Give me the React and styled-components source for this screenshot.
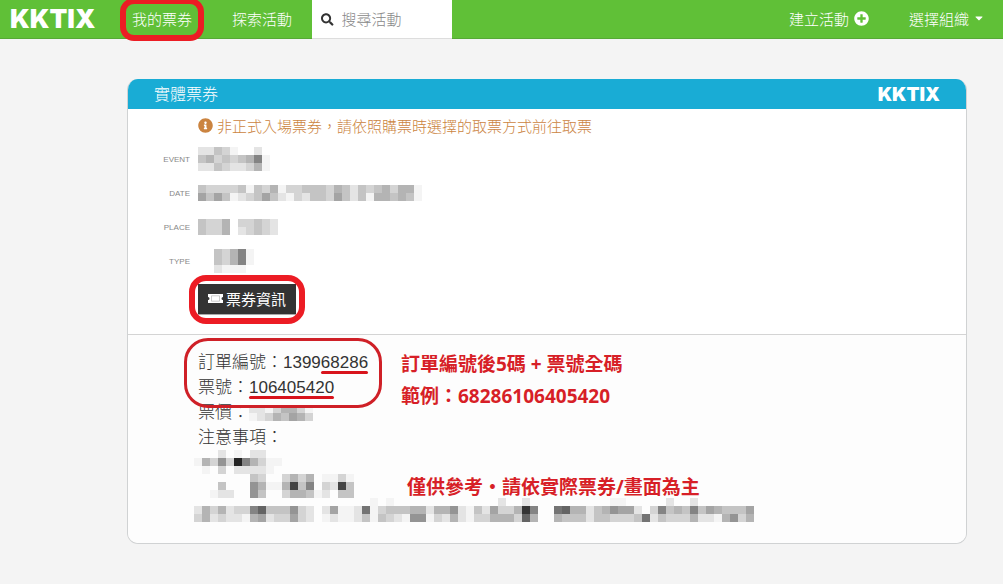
import React from "react";
import styled, { createGlobalStyle } from "styled-components";
import { FaSearch, FaPlusCircle, FaInfoCircle, FaCaretDown } from "react-icons/fa";

const GlobalStyle = createGlobalStyle`
  * {
    box-sizing: border-box;
  }

  body {
    margin: 0;
    background: #f4f4f4;
    color: #333;
    font-family: "Liberation Sans", "Noto Sans CJK TC", sans-serif;
    font-size: 15px;
    font-weight: 300;
  }
`;

const Navbar = styled.nav`
  display: flex;
  align-items: stretch;
  height: 39px;
  background: #60c037;
  border-bottom: 1px solid #56a936;
`;

const Logo = styled.a`
  display: flex;
  align-items: center;
  color: #fff;
  font-family: "Inter", sans-serif;
  font-size: ${(props) => (props.$small ? "19px" : "26px")};
  font-weight: 900;
  text-decoration: none;
`;

const Brand = styled.div`
  display: flex;
  width: 112px;
  padding: 0 0 2px 10px;
`;

const NavLink = styled.a`
  display: flex;
  align-items: center;
  gap: 5px;
  padding: 0 20px 2px;
  color: #fff;
  text-decoration: none;
`;

const NavButton = styled.button`
  display: flex;
  align-items: center;
  gap: 4px;
  padding: 0 18px 2px 20px;
  border: 0;
  background: none;
  color: #fff;
  font: inherit;
  cursor: pointer;
`;

const NavRight = styled.div`
  display: flex;
  margin-left: auto;
`;

const Search = styled.label`
  display: flex;
  align-items: center;
  gap: 8px;
  width: 140px;
  height: 39px;
  padding: 0 9px;
  background: #fff;
  border-bottom: 1px solid #ddd;
`;

const SearchInput = styled.input`
  width: 100%;
  min-width: 0;
  padding: 0;
  border: 0;
  outline: 0;
  font: inherit;

  &::placeholder {
    color: #888;
    opacity: 1;
  }
`;

/* hand-drawn style highlight around whatever it wraps */
const Marked = styled.span`
  position: relative;
  display: inline-block;

  &::after {
    content: "";
    position: absolute;
    inset: ${(props) => props.$inset};
    border: ${(props) => (props.$thin ? "3px" : "6px")} solid
      ${(props) => (props.$thin ? "#cf2027" : "#ec1c24")};
    border-radius: ${(props) => props.$radius};
    pointer-events: none;
  }
`;

const Underlined = styled.span`
  position: relative;

  &::after {
    content: "";
    position: absolute;
    left: 0;
    right: 0;
    bottom: 1px;
    height: 3px;
    border-radius: 2px;
    background: #d8141c;
  }
`;

const Card = styled.main`
  margin: 40px 36px 40px 127px;
  border: 1px solid #d0d2d3;
  border-top: 0;
  border-radius: 11px;
  background: #fff;
  overflow: hidden;
`;

const CardHeader = styled.header`
  display: flex;
  align-items: center;
  justify-content: space-between;
  height: 30px;
  padding: 0 26px;
  background: #19acd5;
  color: #fff;
`;

const CardTitle = styled.h1`
  margin: 0;
  padding-bottom: 3px;
  font-size: 16px;
  font-weight: 300;
`;

const Summary = styled.section`
  padding-bottom: 19px;
`;

const Notice = styled.p`
  display: flex;
  align-items: center;
  gap: 4px;
  height: 33px;
  margin: 0;
  padding-left: 70px;
  color: #cb8440;
`;

const Fields = styled.dl`
  margin: 0;
`;

const Field = styled.div`
  display: grid;
  grid-template-columns: 62px 1fr;
  align-items: center;
  gap: 8px;
  height: 34px;
`;

const FieldLabel = styled.dt`
  color: #888;
  font-size: 8px;
  font-weight: 400;
  text-align: right;
`;

const FieldValue = styled.dd`
  display: flex;
  margin: 0;
`;

const ButtonRow = styled.div`
  display: flex;
  padding: 6px 0 0 70px;
`;

const InfoButton = styled.button`
  display: flex;
  align-items: center;
  gap: 3px;
  height: 31px;
  padding: 0 10px 2px;
  border: 0;
  border-bottom: 1px solid #aaa;
  background: #333;
  color: #fff;
  font: inherit;
  font-weight: 400;
  cursor: pointer;
`;

const Details = styled.section`
  position: relative;
  padding: 15px 12px 21px 66px;
  border-top: 1px solid #d4d4d4;
  background: #fdfdfd;
  font-size: 17px;
  line-height: 25px;
`;

const Lines = styled.div`
  padding-left: 4px;
`;

const Line = styled.div`
  display: flex;
  align-items: center;
  height: 25px;
`;

const Remark = styled.p`
  position: absolute;
  top: ${(props) => props.$top};
  left: ${(props) => props.$left};
  margin: 0;
  color: #d71f27;
  font-family: "Open Sans", "Noto Sans CJK TC", sans-serif;
  font-size: 19px;
  font-weight: 700;
  line-height: 32px;
  white-space: nowrap;
`;

const MosaicSvg = styled.svg`
  display: block;
  max-width: 100%;
`;

const CELL = 8;

// each character is one cell: a hex grey level, or "." for nothing
function Mosaic({ rows }) {
  const width = Math.max(...rows.map((row) => row.length)) * CELL;

  return (
    <MosaicSvg
      width={width}
      height={rows.length * CELL}
      shapeRendering="crispEdges"
      aria-hidden="true"
    >
      {rows.map((row, y) =>
        row.split("").map((level, x) => {
          if (level === ".") return null;
          const grey = parseInt(level, 16) * 16 + 4;
          return (
            <rect
              key={`${x}-${y}`}
              x={x * CELL}
              y={y * CELL}
              width={CELL}
              height={CELL}
              fill={`rgb(${grey},${grey},${grey})`}
            />
          );
        })
      )}
    </MosaicSvg>
  );
}

function TicketIcon() {
  return (
    <svg width="15" height="9" viewBox="0 0 15 9" aria-hidden="true">
      <path
        fill="#fff"
        d="M0 0h15v3a1.5 1.5 0 0 0 0 3V9H0V6a1.5 1.5 0 0 0 0-3z"
      />
      <path fill="none" stroke="#aaa" strokeWidth="0.6" d="M3.5 1.8h8v5.4h-8z" />
    </svg>
  );
}

const fields = [
  { label: "EVENT", rows: ["eecdf..e.", "cbdcdcb8f", "eecdeedbf"] },
  {
    label: "DATE",
    rows: ["cddddcfcdbfddcccdbcecdcbdbbf", "acacfedcacefdeccdacecfbbcbcf"],
  },
  { label: "PLACE", rows: ["cddb.ddcde", "cddb.edcde"] },
  { label: "TYPE", rows: ["..cdb8f", "..cdb8f", "..efff."] },
];

const priceRows = ["eefdbbdf", "fedbcabd"];

const notesRows = [
  "...e.f.ee",
  "fbd9d28bdff",
  ".f.d.eeeef",
  ".......cd..dbdb.ffdf",
  "...c...9bffb4c8.de4c",
  "..fee..9c..dbbcfe.cc",
  "......................f.f.............e..e..........ff.....e..e",
  "ebdbedd86ccc9de.eaffe7fdcccbbebb9efceaddb38..76bbecb9aae.d8cbc8cabccca",
  "dbedeefbaeddade.feffecfcdef99fdebefddbbbd6b..bccceccdddc7ecdddbeefb9db",
];

export default function App() {
  return (
    <>
      <GlobalStyle />
      <Navbar lang="zh-TW">
        <Brand>
          <Logo href="#">KKTIX</Logo>
        </Brand>
        <NavLink href="#tickets">
          <Marked $inset="-10px -12px -12px" $radius="14px">
            我的票券
          </Marked>
        </NavLink>
        <NavLink href="#events">探索活動</NavLink>
        <Search>
          <FaSearch size={15} aria-hidden="true" />
          <SearchInput type="text" placeholder="搜尋活動" aria-label="搜尋活動" />
        </Search>
        <NavRight>
          <NavLink href="#new">
            建立活動
            <FaPlusCircle size={15} />
          </NavLink>
          <NavButton type="button">
            選擇組織
            <FaCaretDown size={12} />
          </NavButton>
        </NavRight>
      </Navbar>

      <Card lang="zh-TW">
        <CardHeader>
          <CardTitle>實體票券</CardTitle>
          <Logo as="span" $small>
            KKTIX
          </Logo>
        </CardHeader>

        <Summary>
          <Notice>
            <FaInfoCircle size={15} />
            非正式入場票券，請依照購票時選擇的取票方式前往取票
          </Notice>
          <Fields>
            {fields.map((field) => (
              <Field key={field.label}>
                <FieldLabel>{field.label}</FieldLabel>
                <FieldValue>
                  <Mosaic rows={field.rows} />
                </FieldValue>
              </Field>
            ))}
          </Fields>
          <ButtonRow>
            <Marked $inset="-9px" $radius="17px">
              <InfoButton type="button">
                <TicketIcon />
                票券資訊
              </InfoButton>
            </Marked>
          </ButtonRow>
        </Summary>

        <Details>
          <Lines>
            <Marked $inset="-12px -14px -8px" $radius="24px" $thin>
              <Line>
                訂單編號：1399<Underlined>68286</Underlined>
              </Line>
              <Line>
                票號：<Underlined>106405420</Underlined>
              </Line>
            </Marked>
            <Line>
              票價：
              <Mosaic rows={priceRows} />
            </Line>
            <Line>注意事項：</Line>
          </Lines>
          <Mosaic rows={notesRows} />
          <Remark $top="13px" $left="273px">
            訂單編號後5碼 + 票號全碼
            <br />
            範例：68286106405420
          </Remark>
          <Remark $top="136px" $left="279px">
            僅供參考・請依實際票券/畫面為主
          </Remark>
        </Details>
      </Card>
    </>
  );
}
